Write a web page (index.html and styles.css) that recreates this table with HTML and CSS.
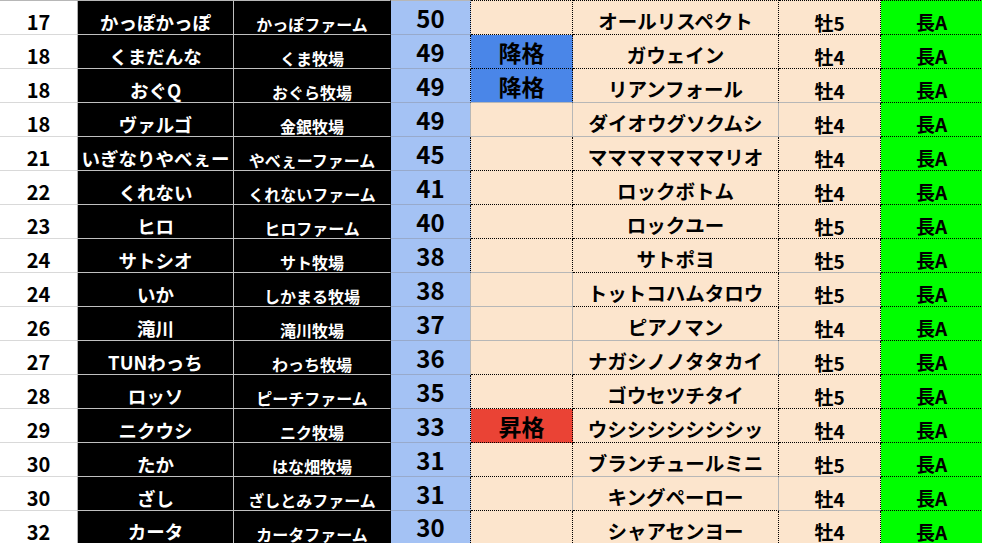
FILE: index.html
```html
<!DOCTYPE html>
<html lang="ja">
<head>
<meta charset="utf-8">
<title>ランキング</title>
<link rel="stylesheet" href="styles.css">
</head>
<body>
<div class="sheet">
  <!-- row 0 -->
  <div class="c rank top">17</div><div class="c name top">かっぽかっぽ</div><div class="c farm top">かっぽファーム</div><div class="c score top dr">50</div><div class="c badge top"></div><div class="c horse top">オールリスペクト</div><div class="c sex top">牡5</div><div class="c grade top">長A</div>
  <!-- row 1 -->
  <div class="c rank">18</div><div class="c name">くまだんな</div><div class="c farm">くま牧場</div><div class="c score dr">49</div><div class="c badge down">降格</div><div class="c horse">ガウェイン</div><div class="c sex">牡4</div><div class="c grade">長A</div>
  <!-- row 2 -->
  <div class="c rank">18</div><div class="c name">おぐQ</div><div class="c farm">おぐら牧場</div><div class="c score dr">49</div><div class="c badge down gb">降格</div><div class="c horse gb">リアンフォール</div><div class="c sex gb">牡4</div><div class="c grade">長A</div>
  <!-- row 3 -->
  <div class="c rank">18</div><div class="c name">ヴァルゴ</div><div class="c farm">金銀牧場</div><div class="c score">49</div><div class="c badge gr gb"></div><div class="c horse gr gb">ダイオウグソクムシ</div><div class="c sex gb">牡4</div><div class="c grade">長A</div>
  <!-- row 4 -->
  <div class="c rank">21</div><div class="c name">いぎなりやべぇー</div><div class="c farm">やべぇーファーム</div><div class="c score dr">45</div><div class="c badge"></div><div class="c horse">マママママママリオ</div><div class="c sex">牡4</div><div class="c grade">長A</div>
  <!-- row 5 -->
  <div class="c rank">22</div><div class="c name">くれない</div><div class="c farm">くれないファーム</div><div class="c score dr">41</div><div class="c badge"></div><div class="c horse">ロックボトム</div><div class="c sex">牡4</div><div class="c grade">長A</div>
  <!-- row 6 -->
  <div class="c rank">23</div><div class="c name">ヒロ</div><div class="c farm">ヒロファーム</div><div class="c score dr">40</div><div class="c badge"></div><div class="c horse">ロックユー</div><div class="c sex">牡5</div><div class="c grade">長A</div>
  <!-- row 7 -->
  <div class="c rank">24</div><div class="c name">サトシオ</div><div class="c farm">サト牧場</div><div class="c score dr">38</div><div class="c badge gb"></div><div class="c horse">サトポヨ</div><div class="c sex gb">牡5</div><div class="c grade">長A</div>
  <!-- row 8 -->
  <div class="c rank">24</div><div class="c name">いか</div><div class="c farm">しかまる牧場</div><div class="c score">38</div><div class="c badge gr gb"></div><div class="c horse">トットコハムタロウ</div><div class="c sex gb">牡5</div><div class="c grade">長A</div>
  <!-- row 9 -->
  <div class="c rank">26</div><div class="c name">滝川</div><div class="c farm">滝川牧場</div><div class="c score">37</div><div class="c badge gr gb"></div><div class="c horse gb">ピアノマン</div><div class="c sex gb">牡4</div><div class="c grade">長A</div>
  <!-- row 10 -->
  <div class="c rank">27</div><div class="c name">TUNわっち</div><div class="c farm">わっち牧場</div><div class="c score">36</div><div class="c badge gr"></div><div class="c horse gr">ナガシノノタタカイ</div><div class="c sex">牡5</div><div class="c grade">長A</div>
  <!-- row 11 -->
  <div class="c rank">28</div><div class="c name">ロッソ</div><div class="c farm">ピーチファーム</div><div class="c score dr">35</div><div class="c badge"></div><div class="c horse">ゴウセツチタイ</div><div class="c sex">牡5</div><div class="c grade">長A</div>
  <!-- row 12 -->
  <div class="c rank">29</div><div class="c name">ニクウシ</div><div class="c farm">ニク牧場</div><div class="c score dr">33</div><div class="c badge up">昇格</div><div class="c horse">ウシシシシシシシッ</div><div class="c sex">牡4</div><div class="c grade">長A</div>
  <!-- row 13 -->
  <div class="c rank">30</div><div class="c name">たか</div><div class="c farm">はな畑牧場</div><div class="c score dr">31</div><div class="c badge"></div><div class="c horse gb">ブランチュールミニ</div><div class="c sex gb">牡5</div><div class="c grade">長A</div>
  <!-- row 14 -->
  <div class="c rank">30</div><div class="c name">ざし</div><div class="c farm">ざしとみファーム</div><div class="c score dr">31</div><div class="c badge gr"></div><div class="c horse gr">キングペーロー</div><div class="c sex gb">牡4</div><div class="c grade">長A</div>
  <!-- row 15 -->
  <div class="c rank">32</div><div class="c name">カータ</div><div class="c farm">カータファーム</div><div class="c score dr">30</div><div class="c badge"></div><div class="c horse">シャアセンヨー</div><div class="c sex">牡4</div><div class="c grade">長A</div>
</div>
</body>
</html>
```

FILE: styles.css
```css
html, body {
  margin: 0;
  padding: 0;
  background: #ffffff;
  overflow: hidden;
}

.sheet {
  display: grid;
  grid-template-columns: 78px 156px 157px 80px 102px 206px 102px 102px;
  grid-template-rows: 35px repeat(14, 34px) 32px;
  width: 983px;
  height: 543px;
  font-family: "Noto Sans CJK JP", "Noto Sans", sans-serif;
  font-weight: 700;
  color: #000;
}

.c {
  box-sizing: border-box;
  display: flex;
  align-items: center;
  justify-content: center;
  line-height: 1;
  white-space: nowrap;
  border-right: 1px solid #b7b7b7;
  border-bottom: 1px solid #b7b7b7;
}

.c.top {
  border-top: 1px solid #b7b7b7;
}

.sheet > .c:nth-last-child(-n+8) {
  border-bottom: none;
}

.rank {
  background: #ffffff;
  font-size: 20px;
  padding-top: 9px;
  border-bottom-color: #d9d9d9;
  border-right-color: #b0b0b0;
}

.name {
  background: #000000;
  color: #ffffff;
  font-size: 18.5px;
  padding-top: 9px;
  border-color: #c0c0c0;
}

.farm {
  background: #000000;
  color: #ffffff;
  font-size: 16px;
  padding-top: 13px;
  border-bottom-color: #c0c0c0;
  border-right-color: #000000;
}

.score {
  background: #a4c2f4;
  font-size: 24px;
  padding-top: 0;
  border-bottom-color: #98aacb;
  border-right-color: #b7b7b7;
}

.score.dr {
  border-right: 1px dotted #000000;
}

.badge,
.horse,
.sex,
.grade {
  background: #fce5cd;
  border-right: 1px dotted #000000;
  border-bottom: 1px dotted #000000;
}

.badge.top,
.horse.top,
.sex.top,
.grade.top {
  border-top: 1px dotted #000000;
}

.badge {
  font-size: 23px;
  padding-top: 2px;
}

.badge.down {
  background: #4a86e8;
}

.badge.up {
  background: #ea4335;
}

.horse {
  font-size: 19.5px;
  padding-top: 7px;
}

.sex {
  font-size: 19px;
  padding-top: 9px;
}

.grade {
  background: #00ff00;
  font-size: 19px;
  padding-top: 8px;
}

.gr {
  border-right: 1px solid #b7b7b7;
}

.gb {
  border-bottom: 1px solid #b7b7b7;
}
```
